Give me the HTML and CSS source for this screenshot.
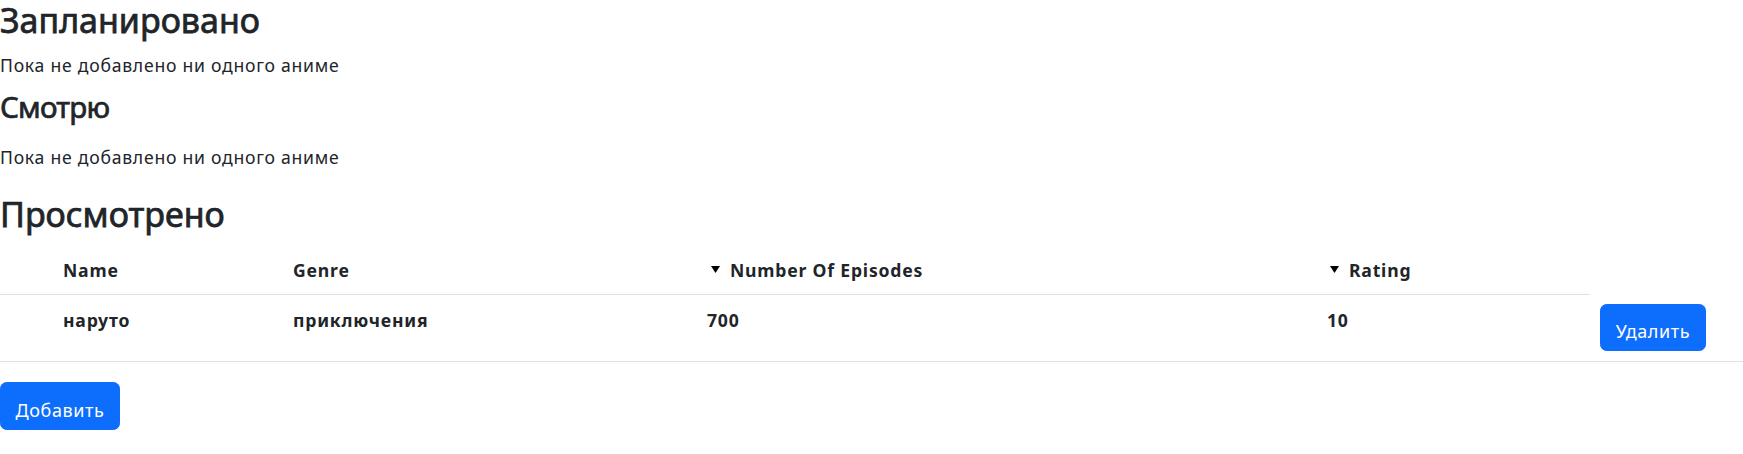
FILE: index.html
```html
<!DOCTYPE html>
<html lang="ru">
<head>
<meta charset="utf-8">
<title>Аниме</title>
<link rel="stylesheet" href="styles.css">
</head>
<body>
<main class="page">
  <h2 class="section-title">Запланировано</h2>
  <p class="empty empty-first">Пока не добавлено ни одного аниме</p>

  <h3 class="section-sub">Смотрю</h3>
  <p class="empty empty-second">Пока не добавлено ни одного аниме</p>

  <h2 class="section-title section-done">Просмотрено</h2>
  <table class="anime-table">
    <colgroup>
      <col class="c-idx">
      <col class="c-name">
      <col class="c-genre">
      <col class="c-eps">
      <col class="c-rating">
      <col class="c-act">
    </colgroup>
    <thead>
      <tr>
        <th></th>
        <th>Name</th>
        <th>Genre</th>
        <th><svg class="sort" width="9" height="7" viewBox="0 0 9 7"><path d="M0 0H9L4.5 7Z"/></svg>Number Of Episodes</th>
        <th><svg class="sort" width="9" height="7" viewBox="0 0 9 7"><path d="M0 0H9L4.5 7Z"/></svg>Rating</th>
      </tr>
    </thead>
    <tbody>
      <tr>
        <td></td>
        <td>наруто</td>
        <td>приключения</td>
        <td>700</td>
        <td>10</td>
        <td class="act"><button class="btn btn-del" type="button">Удалить</button></td>
      </tr>
    </tbody>
  </table>
  <button class="btn btn-add" type="button">Добавить</button>
</main>
</body>
</html>
```
FILE: styles.css
```css
html, body {
  margin: 0;
  padding: 0;
  background: #fff;
}

body {
  font-family: "Noto Sans", "Open Sans", sans-serif;
  font-size: 17.6px;
  line-height: 26.4px;
  color: #212529;
}

.page {
  display: block;
}

.section-title {
  margin: 0;
  font-size: 34px;
  line-height: 40px;
  font-weight: 400;
  letter-spacing: 0;
  -webkit-text-stroke: 0.75px #212529;
}

.section-done {
  margin-top: 23.4px;
}

.section-sub {
  margin: 10.35px 0 0;
  font-size: 29.5px;
  line-height: 36px;
  font-weight: 400;
  letter-spacing: -0.8px;
  -webkit-text-stroke: 0.7px #212529;
}

.empty {
  margin: 0;
  letter-spacing: 0.75px;
}

.empty-first {
  margin-top: 12px;
}

.empty-second {
  margin-top: 19.25px;
}

.anime-table {
  margin-top: 14.4px;
  width: 100%;
  table-layout: fixed;
  border-collapse: collapse;
  color: #212529;
  font-weight: 700;
  letter-spacing: 0.8px;
}

.c-idx { width: 54px; }
.c-name { width: 230px; }
.c-genre { width: 414px; }
.c-eps { width: 620px; }
.c-rating { width: 272px; }
.c-act { width: 153px; }

.anime-table th,
.anime-table td {
  text-align: left;
  vertical-align: top;
  padding: 0 9px;
  border-bottom: 1px solid #dee2e6;
}

.anime-table th {
  padding-top: 8.8px;
  padding-bottom: 10.6px;
  font-weight: 700;
}

.anime-table th:last-child {
  padding-left: 8px;
}

.anime-table td {
  padding-top: 12px;
  padding-bottom: 0;
}

.anime-table td.act {
  padding: 10px;
}

.sort {
  display: inline-block;
  margin: 0 10px 0 4px;
  vertical-align: 4px;
  fill: #000;
}

.btn {
  display: inline-block;
  box-sizing: border-box;
  border: 1px solid #0d6efd;
  background: #0d6efd;
  color: #fff;
  font-family: "Noto Sans", "Open Sans", sans-serif;
  font-size: 18px;
  line-height: 26.4px;
  font-weight: 400;
  letter-spacing: 0.6px;
  border-radius: 6.6px;
  text-align: center;
  cursor: pointer;
}

.btn-del {
  width: 106px;
  height: 47px;
  padding: 6.5px 0 0;
}

.btn-add {
  margin-top: 20px;
  width: 120px;
  height: 48px;
  padding: 7.5px 0 0;
  vertical-align: top;
}
```
